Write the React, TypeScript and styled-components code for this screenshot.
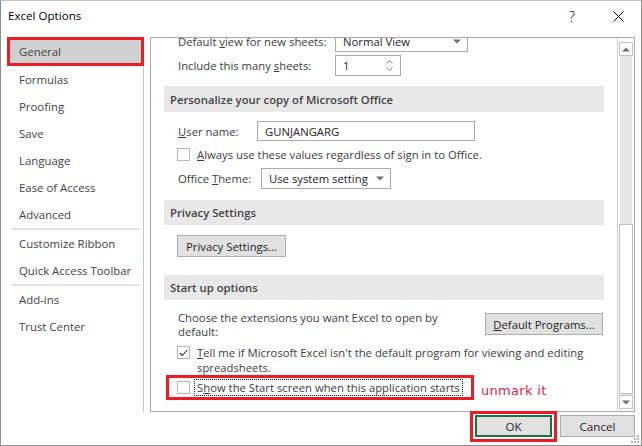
import React from 'react';
import styled, { createGlobalStyle } from 'styled-components';

const GlobalStyle = createGlobalStyle`
  html, body { margin: 0; padding: 0; background: #fff; }
  body { font-family: "Open Sans", "Noto Sans", sans-serif; }
  * { box-sizing: border-box; }
`;

const Window = styled.div`
  position: relative;
  width: 642px;
  height: 446px;
  background: #fff;
  border: 1px solid #8f8f8f;
  border-top-color: #c4c4c4;
  display: flex;
  flex-direction: column;
  color: #3d3d3d;
  font-size: 11.3px;
  overflow: hidden;
`;

const TitleBar = styled.div`
  height: 36px;
  flex-shrink: 0;
  display: flex;
  align-items: flex-start;
  justify-content: space-between;
`;

const Title = styled.div`
  padding: 7px 0 0 7px;
  line-height: 16px;
  font-size: 11.6px;
  color: #000;
`;

const TitleButtons = styled.div`
  display: flex;
`;

const TitleButton = styled.div`
  width: 46px;
  height: 30px;
  display: flex;
  align-items: center;
  justify-content: center;
  font-size: 14px;
  font-weight: 300;
  color: #000;
`;

const Body = styled.div`
  height: 375px;
  flex-shrink: 0;
  display: flex;
  padding: 0 6px;
  gap: 6px;
`;

const Nav = styled.div`
  width: 137px;
  border-right: 1px solid #c6c6c6;
  display: flex;
  flex-direction: column;
`;

const NavItem = styled.div<{ $selected?: boolean }>`
  height: ${(p) => (p.$selected ? 29 : 27)}px;
  display: flex;
  align-items: center;
  padding-left: ${(p) => (p.$selected ? 9 : 12)}px;
  font-size: 11.4px;
  color: #444;
  background: ${(p) => (p.$selected ? '#d0d0d0' : 'transparent')};
  border: ${(p) => (p.$selected ? '3px solid #ec1c24' : 'none')};
  margin-right: -1px;
`;

const NavSeparator = styled.div`
  height: 2px;
  margin: 0 3px 0 4px;
  background: #e3e3e3;
`;

const Panel = styled.div`
  width: 485px;
  border: 1px solid #ababab;
  display: flex;
`;

const Scroll = styled.div`
  flex: 1;
  overflow: hidden;
`;

const ScrollInner = styled.div`
  margin-top: -7px;
  display: flex;
  flex-direction: column;
`;

const Row = styled.div<{ $mt: number; $h?: number; $pl?: number }>`
  display: flex;
  align-items: center;
  margin-top: ${(p) => p.$mt}px;
  height: ${(p) => (p.$h ? `${p.$h}px` : 'auto')};
  padding-left: ${(p) => p.$pl ?? 27}px;
  flex-shrink: 0;
`;

const Label = styled.div<{ $w: number }>`
  width: ${(p) => p.$w}px;
  flex-shrink: 0;
  white-space: nowrap;
`;

const SectionHeader = styled.div<{ $mt: number; $h: number }>`
  margin: ${(p) => p.$mt}px 13px 0 13px;
  height: ${(p) => p.$h}px;
  flex-shrink: 0;
  background: #e8e8e8;
  padding-left: 6px;
  display: flex;
  align-items: center;
  font-weight: 600;
  color: #444;
`;

const Field = styled.div<{ $w: number; $h?: number }>`
  width: ${(p) => p.$w}px;
  height: ${(p) => p.$h ?? 21}px;
  border: 1px solid #ababab;
  background: #fff;
  display: flex;
  align-items: center;
  justify-content: space-between;
  padding: 0 6px 0 7px;
  color: #262626;
  white-space: nowrap;
`;

const Spin = styled.div`
  display: flex;
  flex-direction: column;
  gap: 3px;
  margin-right: 1px;
`;

const Box = styled.div`
  width: 13px;
  height: 13px;
  border: 1px solid #b5b5b5;
  background: #fff;
  flex-shrink: 0;
  display: flex;
  align-items: center;
  justify-content: center;
`;

const CheckText = styled.div`
  margin-left: 7px;
  white-space: nowrap;
`;

const Button = styled.div<{ $w: number }>`
  width: ${(p) => p.$w}px;
  height: 22px;
  flex-shrink: 0;
  border: 1px solid #adadad;
  background: #e1e1e1;
  display: flex;
  align-items: center;
  justify-content: center;
  color: #262626;
  white-space: nowrap;
`;

const StartRow = styled.div`
  display: flex;
  align-items: flex-start;
  justify-content: space-between;
  margin-top: 11px;
  padding: 0 14px 0 27px;
`;

const StartText = styled.div`
  line-height: 14px;
  white-space: nowrap;
`;

const TellRow = styled.div`
  display: flex;
  align-items: flex-start;
  margin-top: 6px;
  padding-left: 26px;
  line-height: 15px;
`;

const TellText = styled.div`
  margin-left: 7px;
  white-space: nowrap;
`;

const AnnotRow = styled.div`
  display: flex;
  align-items: center;
  gap: 7px;
  padding-left: 15px;
`;

const RedBox = styled.div`
  width: 308px;
  height: 25px;
  border: 3px solid #ec1c24;
  display: flex;
  align-items: center;
  padding-left: 8px;
`;

const Focused = styled.div`
  margin-left: 5px;
  padding: 0 2px;
  line-height: 15px;
  outline: 1px dotted #222;
  white-space: nowrap;
`;

const Note = styled.div`
  margin-top: 6px;
  font-family: "DejaVu Sans", cursive;
  font-size: 13px;
  letter-spacing: 0.3px;
  color: #e8194f;
`;

const ScrollBar = styled.div`
  width: 17px;
  flex-shrink: 0;
  border-left: 1px solid #cfcfcf;
  display: flex;
  flex-direction: column;
  padding: 4px 1px 2px 1px;
`;

const ArrowBtn = styled.div`
  height: 14px;
  border: 1px solid #c4c4c4;
  display: flex;
  align-items: center;
  justify-content: center;
  flex-shrink: 0;
`;

const Track = styled.div`
  flex: 1;
  display: flex;
  flex-direction: column;
  justify-content: flex-end;
  background: #e6e6e6;
  margin: 0 1px;
`;

const Thumb = styled.div`
  height: 170px;
  background: #fff;
  border: 1px solid #bdbdbd;
  margin: 0 -1px 1px;
`;

const Footer = styled.div`
  flex: 1;
  display: flex;
  justify-content: flex-end;
  align-items: flex-start;
  padding-right: 6px;
  gap: 3px;
`;

const OkHighlight = styled.div`
  border: 3px solid #ec1c24;
  padding: 1px 2px 2px;
  margin-top: -1px;
`;

const DialogButton = styled.div<{ $default?: boolean }>`
  width: ${(p) => (p.$default ? 77 : 75)}px;
  height: 22px;
  margin-top: ${(p) => (p.$default ? 0 : 3)}px;
  border: ${(p) => (p.$default ? '2px solid #217346' : '1px solid #adadad')};
  background: #e1e1e1;
  display: flex;
  align-items: center;
  justify-content: center;
  color: #262626;
  font-size: 11.6px;
`;

const Grip = styled.svg`
  position: absolute;
  right: 1px;
  bottom: 1px;
`;

const DownTri = () => (
  <svg width="8" height="5" viewBox="0 0 8 5">
    <path d="M0 0.5 H8 L4 4.5 Z" fill="#6e6e6e" />
  </svg>
);

const UpTri = () => (
  <svg width="8" height="5" viewBox="0 0 8 5">
    <path d="M0 4.5 H8 L4 0.5 Z" fill="#6e6e6e" />
  </svg>
);

const Check = () => (
  <svg width="9" height="8" viewBox="0 0 9 8">
    <path d="M0.8 4 L3.3 6.5 L8.3 1" fill="none" stroke="#333" strokeWidth="1.1" />
  </svg>
);

const navTop = ['General', 'Formulas', 'Proofing', 'Save', 'Language', 'Ease of Access', 'Advanced'];

export default function App() {
  return (
    <>
      <GlobalStyle />
      <Window>
        <TitleBar>
          <Title>Excel Options</Title>
          <TitleButtons>
            <TitleButton>?</TitleButton>
            <TitleButton>
              <svg width="11" height="11" viewBox="0 0 11 11">
                <path d="M0.5 0.5 L10.5 10.5 M10.5 0.5 L0.5 10.5" stroke="#000" strokeWidth="1" />
              </svg>
            </TitleButton>
          </TitleButtons>
        </TitleBar>

        <Body>
          <Nav>
            {navTop.map((n, i) => (
              <NavItem key={n} $selected={i === 0}>
                {n}
              </NavItem>
            ))}
            <NavSeparator />
            <NavItem>Customize Ribbon</NavItem>
            <NavItem>Quick Access Toolbar</NavItem>
            <NavSeparator />
            <NavItem>Add-ins</NavItem>
            <NavItem>Trust Center</NavItem>
          </Nav>

          <Panel>
            <Scroll>
              <ScrollInner>
                <Row $mt={0} $h={21}>
                  <Label $w={157}>
                    Default <u>v</u>iew for new sheets:
                  </Label>
                  <Field $w={133}>
                    Normal View
                    <DownTri />
                  </Field>
                </Row>
                <Row $mt={3} $h={21}>
                  <Label $w={157}>
                    Include this many <u>s</u>heets:
                  </Label>
                  <Field $w={66}>
                    1
                    <Spin>
                      <svg width="7" height="4" viewBox="0 0 7 4">
                        <path d="M0.5 3.5 L3.5 0.5 L6.5 3.5" fill="none" stroke="#8a8a8a" />
                      </svg>
                      <svg width="7" height="4" viewBox="0 0 7 4">
                        <path d="M0.5 0.5 L3.5 3.5 L6.5 0.5" fill="none" stroke="#8a8a8a" />
                      </svg>
                    </Spin>
                  </Field>
                </Row>

                <SectionHeader $mt={10} $h={26}>
                  Personalize your copy of Microsoft Office
                </SectionHeader>
                <Row $mt={9} $h={20}>
                  <Label $w={79}>
                    <u>U</u>ser name:
                  </Label>
                  <Field $w={218} $h={20}>
                    GUNJANGARG
                  </Field>
                </Row>
                <Row $mt={7} $h={13} $pl={26}>
                  <Box />
                  <CheckText>
                    <u>A</u>lways use these values regardless of sign in to Office.
                  </CheckText>
                </Row>
                <Row $mt={7} $h={21}>
                  <Label $w={83}>
                    Office <u>T</u>heme:
                  </Label>
                  <Field $w={130}>
                    Use system setting
                    <DownTri />
                  </Field>
                </Row>

                <SectionHeader $mt={11} $h={25}>
                  Privacy Settings
                </SectionHeader>
                <Row $mt={10} $h={22} $pl={26}>
                  <Button $w={109}>Privacy Settings...</Button>
                </Row>

                <SectionHeader $mt={18} $h={25}>
                  Start up options
                </SectionHeader>
                <StartRow>
                  <StartText>
                    Choose the extensions you want Excel to open by
                    <br />
                    default:
                  </StartText>
                  <Button $w={118} style={{ marginTop: 2 }}>
                    <u>D</u>efault Programs...
                  </Button>
                </StartRow>
                <TellRow>
                  <Box style={{ marginTop: 1 }}>
                    <Check />
                  </Box>
                  <TellText>
                    <u>T</u>ell me if Microsoft Excel isn't the default program for viewing and editing
                    <br />
                    spreadsheets.
                  </TellText>
                </TellRow>
                <AnnotRow>
                  <RedBox>
                    <Box />
                    <Focused>
                      S<u>h</u>ow the Start screen when this application starts
                    </Focused>
                  </RedBox>
                  <Note>unmark it</Note>
                </AnnotRow>
              </ScrollInner>
            </Scroll>
            <ScrollBar>
              <ArrowBtn>
                <UpTri />
              </ArrowBtn>
              <Track>
                <Thumb />
              </Track>
              <ArrowBtn>
                <DownTri />
              </ArrowBtn>
            </ScrollBar>
          </Panel>
        </Body>

        <Footer>
          <OkHighlight>
            <DialogButton $default>OK</DialogButton>
          </OkHighlight>
          <DialogButton>Cancel</DialogButton>
        </Footer>

        <Grip width="9" height="9" viewBox="0 0 9 9">
          <g fill="#b5b5b5">
            <rect x="6" y="0" width="2" height="2" />
            <rect x="3" y="3" width="2" height="2" />
            <rect x="6" y="3" width="2" height="2" />
            <rect x="0" y="6" width="2" height="2" />
            <rect x="3" y="6" width="2" height="2" />
            <rect x="6" y="6" width="2" height="2" />
          </g>
        </Grip>
      </Window>
    </>
  );
}
